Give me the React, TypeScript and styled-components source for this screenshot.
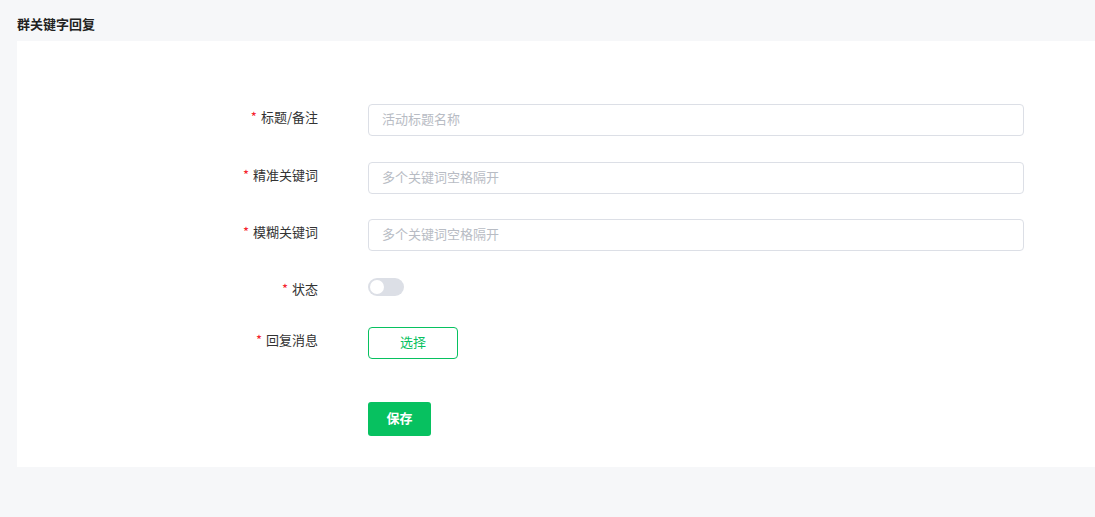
import React, { useState } from "react";
import styled, { createGlobalStyle } from "styled-components";

const GlobalStyle = createGlobalStyle`
	html, body {
		margin: 0;
		padding: 0;
		background: #f6f7f9;
		font-family: "Noto Sans CJK SC", "Liberation Sans", sans-serif;
		color: #333;
	}
`;

const Page = styled.div`
	padding: 0 0 50px 17px;
	min-height: 517px;
	box-sizing: border-box;
`;

const Title = styled.h1`
	margin: 0;
	height: 41px;
	line-height: 48px;
	font-size: 13px;
	font-weight: 700;
	color: #222;
`;

const Card = styled.div`
	background: #fff;
	padding: 63px 0 31px;
`;

const Form = styled.form`
	display: flex;
	flex-direction: column;
	width: 1007px;
`;

const Row = styled.div<{ $height?: number; $gap?: number }>`
	display: flex;
	align-items: flex-start;
	height: ${(p) => p.$height ?? 32}px;
	margin-bottom: ${(p) => p.$gap ?? 25}px;
`;

const Label = styled.label`
	width: 301px;
	flex-shrink: 0;
	padding-right: 50px;
	text-align: right;
	font-size: 13px;
	line-height: 26px;
	color: #333;
`;

const Star = styled.span`
	color: #f5222d;
	margin-right: 4px;
`;

const Field = styled.div`
	flex: 1;
`;

const Input = styled.input`
	width: 100%;
	height: 32px;
	box-sizing: border-box;
	border: 1px solid #dcdfe6;
	border-radius: 4px;
	padding: 0 13px 3px;
	font-family: inherit;
	font-size: 13px;
	color: #333;
	outline: none;
	&::placeholder {
		color: #b8bcc4;
	}
`;

const SwitchTrack = styled.button<{ $on: boolean }>`
	margin-top: 2px;
	width: 36px;
	height: 18px;
	border: none;
	padding: 0;
	border-radius: 9px;
	background: ${(p) => (p.$on ? "#07c160" : "#dcdfe6")};
	position: relative;
	cursor: pointer;
`;

const SwitchKnob = styled.span<{ $on: boolean }>`
	position: absolute;
	top: 2px;
	left: ${(p) => (p.$on ? "20px" : "2px")};
	width: 14px;
	height: 14px;
	border-radius: 50%;
	background: #fff;
	transition: left 0.2s;
`;

const OutlineButton = styled.button`
	width: 90px;
	height: 32px;
	border: 1px solid #07c160;
	border-radius: 4px;
	background: #fff;
	color: #07c160;
	font-family: inherit;
	font-size: 13px;
	padding: 0 0 4px;
	cursor: pointer;
`;

const PrimaryButton = styled.button`
	width: 63px;
	height: 34px;
	border: none;
	border-radius: 3px;
	background: #07c160;
	color: #fff;
	font-family: inherit;
	font-size: 13px;
	font-weight: 700;
	padding: 0 0 4px;
	cursor: pointer;
`;

export default function App() {
	const [on, setOn] = useState(false);
	return (
		<>
			<GlobalStyle />
			<Page>
				<Title>群关键字回复</Title>
				<Card>
					<Form onSubmit={(e) => e.preventDefault()}>
						<Row $gap={26}>
							<Label>
								<Star>*</Star>标题/备注
							</Label>
							<Field>
								<Input placeholder="活动标题名称" />
							</Field>
						</Row>
						<Row>
							<Label>
								<Star>*</Star>精准关键词
							</Label>
							<Field>
								<Input placeholder="多个关键词空格隔开" />
							</Field>
						</Row>
						<Row>
							<Label>
								<Star>*</Star>模糊关键词
							</Label>
							<Field>
								<Input placeholder="多个关键词空格隔开" />
							</Field>
						</Row>
						<Row $height={26} $gap={25}>
							<Label>
								<Star>*</Star>状态
							</Label>
							<Field>
								<SwitchTrack type="button" $on={on} onClick={() => setOn(!on)}>
									<SwitchKnob $on={on} />
								</SwitchTrack>
							</Field>
						</Row>
						<Row $gap={43}>
							<Label>
								<Star>*</Star>回复消息
							</Label>
							<Field>
								<OutlineButton type="button">选择</OutlineButton>
							</Field>
						</Row>
						<Row $height={34} $gap={0}>
							<Label />
							<Field>
								<PrimaryButton type="submit">保存</PrimaryButton>
							</Field>
						</Row>
					</Form>
				</Card>
			</Page>
		</>
	);
}
